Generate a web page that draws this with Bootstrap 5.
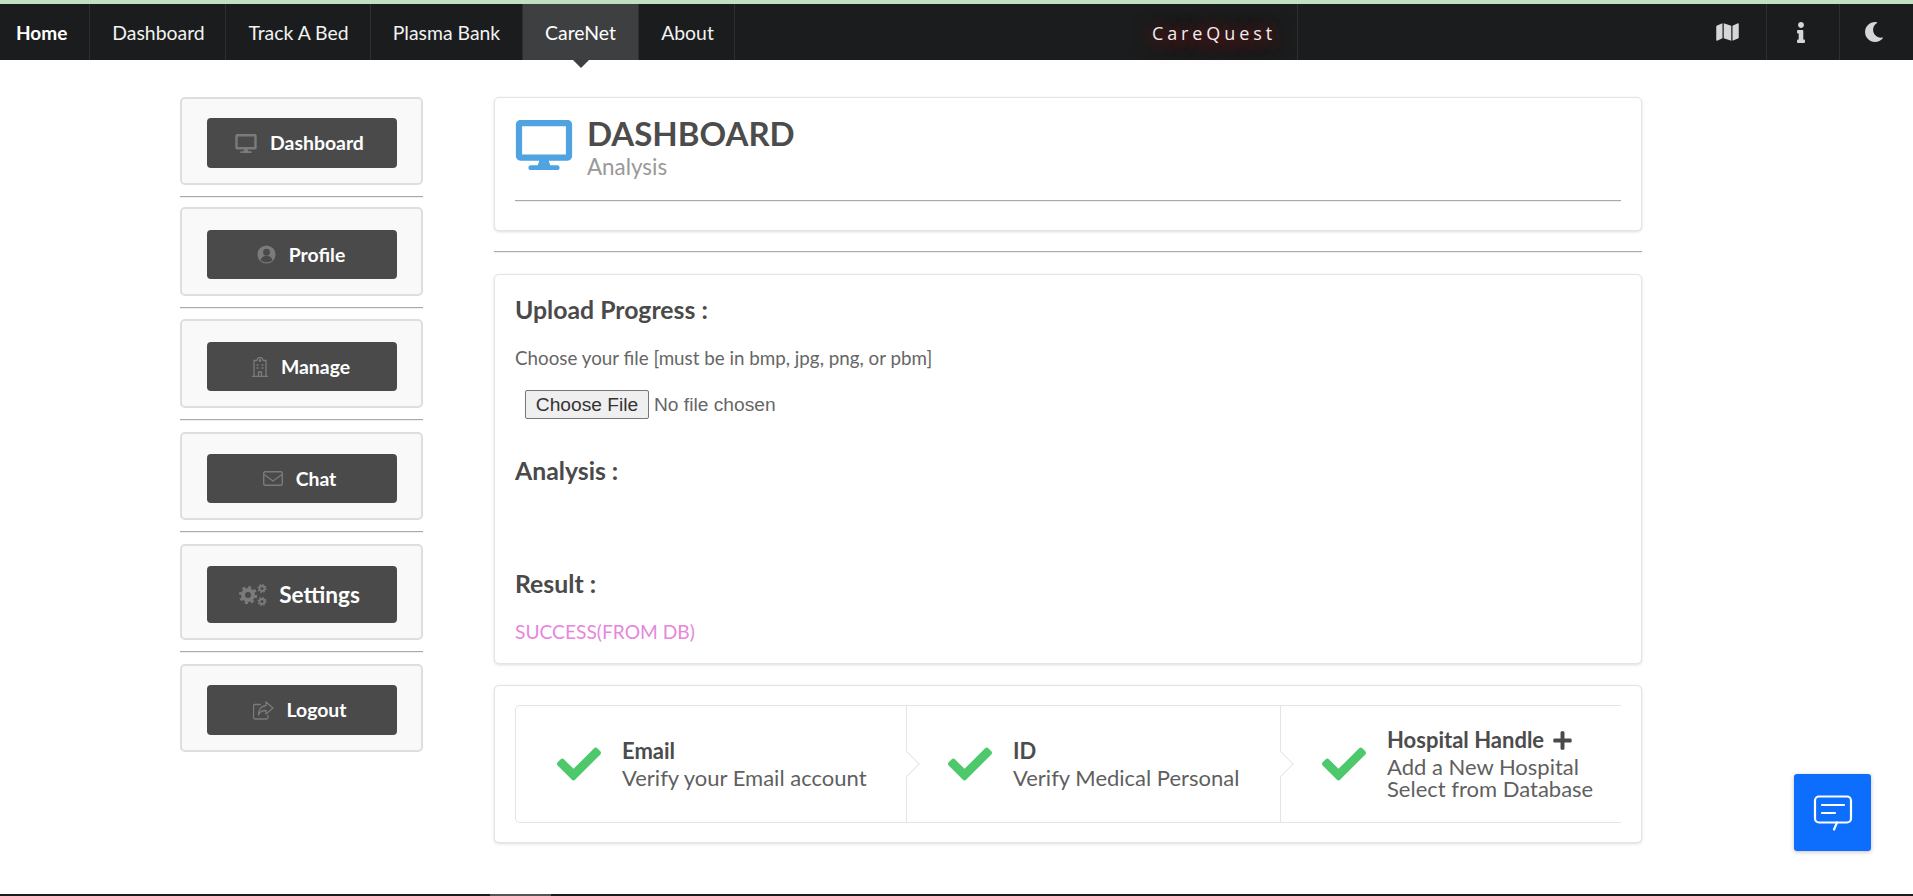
<!DOCTYPE html>
<html lang="en">
<head>
<meta charset="utf-8">
<title>CareQuest</title>
<link href="https://cdn.jsdelivr.net/npm/bootstrap@5.3.0/dist/css/bootstrap.min.css" rel="stylesheet">
<style>
html,body{height:100%}
body{font-family:Lato,"Liberation Sans",sans-serif;color:#4a4a4a;background:#fff;overflow:hidden}
.cq-strip{height:4px;background:#c3dfc3}
.cq-nav{height:56px;background:#1b1c1d;padding:0;flex-wrap:nowrap;align-items:stretch;justify-content:flex-start}
.cq-link{position:relative;display:flex;flex:none;align-items:center;justify-content:center;padding-top:2px;color:#f2f2f2;font-size:19.4px;text-decoration:none;border-right:1px solid #2e2f30;white-space:nowrap}
.cq-link:hover{color:#fff}
.cq-w1{width:136px;padding-left:2px}
.cq-w2{width:145px;padding-left:1px}
.cq-w3{width:152px}
.cq-w4{width:96px;padding-left:2px}
.cq-link.cq-home{justify-content:flex-start;padding-left:16px;font-weight:700;color:#fff;width:90px;font-size:19px}
.cq-link.cq-on{background:#3e3f41;color:#fff;width:116px}
.cq-link.cq-on::after{content:"";position:absolute;left:50%;top:100%;margin-left:-8px;border:8px solid transparent;border-top-color:#3e3f41;border-bottom:0}
.cq-brand{width:563px;justify-content:flex-end;padding-right:21px;font-family:"Open Sans",sans-serif;font-size:18px;letter-spacing:3.9px;color:#eee;text-shadow:0 2px 14px #a01414,0 2px 22px #7a0f0f}
.cq-spacer{flex:1 1 auto}
.cq-icon{display:flex;align-items:center;justify-content:center;color:#d6d6d6;width:73px;padding-right:5px}
.cq-icon svg{fill:currentColor;display:block}
.cq-i1,.cq-i2{border-right:1px solid #2e2f30}
.cq-page{padding:37px 0 51px 180px;height:832px;gap:71px;align-items:flex-start}
.cq-side{width:243px;flex:none}
.cq-tile{background:#f9f9f9;border:2px solid #dedede;border-radius:5px;display:flex;justify-content:center;align-items:flex-start;padding-top:19px}
.cq-t1{height:88px}
.cq-t2{height:89px;padding-top:21px}
.cq-t4{height:88px;padding-top:20px}
.cq-t3{height:96px;padding-top:20px}
.cq-tile .cq-btn{width:190px;height:49px;background:#4a4a4a;color:#fff;border:0;border-radius:4px;font-weight:700;font-size:19.4px;padding:0 4px 0 0;display:flex;align-items:center;justify-content:center;gap:13px}
.cq-tile .cq-mid{padding-right:1px}
.cq-tile .cq-btn svg{display:block;color:#7b7b7b}
.cq-t1 .cq-btn{height:50px}
.cq-tile .cq-big{height:57px;font-size:22.600px;gap:12px}
.cq-rule{margin:11px 0;border:0;border-top:1px solid #a9a9a9;border-bottom:1px solid #efefef;opacity:1;height:2px}
.cq-side .cq-tight{margin-bottom:9px}
.cq-side .cq-snug{margin-bottom:10px}
.cq-main{width:1148px;flex:none}
.cq-panel{background:#fff;border:1px solid #e4e4e4;border-radius:5px;box-shadow:0 1px 3px rgba(34,36,38,.16);padding:0 20px}
.cq-p1{height:134px;padding-top:20px}
.cq-p2{height:390px;padding-top:20px}
.cq-p3{height:158px;padding-top:19px;margin-top:21px}
.cq-head{gap:14px;height:67px}
.cq-logo{flex:none;margin-top:2px}
.cq-head h2{font-size:33px;line-height:36px;font-weight:700;margin:-3px 0 0;color:#4c4c4c}
.cq-head p{font-size:22.400px;line-height:24px;margin:4px 0 0;color:#999}
.cq-p1 .cq-rule{margin:15px 0 0}
.cq-main>.cq-rule{margin:20px 0 21px}
.cq-p2 h3{font-size:24.800px;line-height:30px;font-weight:700;margin:0;color:#4a4a4a}
.cq-hint{font-size:18.800px;line-height:24px;margin:21px 0 20px;color:#666}
.cq-file{display:block;margin-left:10px;font-family:"Liberation Sans",sans-serif;font-size:19.200px;color:#666}
.cq-file::file-selector-button{font:inherit;height:29px;width:124px;padding:0;margin-right:5px;color:#333;background:#efefef;border:1px solid #767676;border-radius:2px}
.cq-p2 .cq-s2{margin-top:36px}
.cq-p2 .cq-s3{margin-top:83px}
.cq-ok{color:#e587dd;font-size:19.200px;line-height:24px;margin:21px 0 0}
.cq-steps{height:118px;border:1px solid #e4e4e4;border-right:0;border-radius:5px 0 0 5px;overflow:hidden}
.cq-step{position:relative;display:flex;align-items:center;height:100%;padding-left:41px;gap:21px;flex:none}
.cq-step+.cq-step{border-left:1px solid #e4e4e4}
.cq-step+.cq-step::before{content:"";position:absolute;left:-10px;top:50%;width:20px;height:20px;margin-top:-10px;background:#fff;border-top:1px solid #e4e4e4;border-right:1px solid #e4e4e4;transform:rotate(45deg) scale(.9)}
.cq-s-a{width:390px}
.cq-s-b{width:374px}
.cq-s-c{width:340px}
.cq-chk{fill:#4dc96b;display:block;flex:none}
.cq-tt{font-size:22px;line-height:24px;font-weight:700;color:#4c4c4c;margin-bottom:4px}
.cq-plus{gap:9px}
.cq-dd{font-size:22px;line-height:22px;color:#5f5f5f}
.cq-fab{position:absolute;left:1794px;top:774px;width:77px;height:77px;padding:0;background:#0d6efd;border:0;border-radius:3px;box-shadow:0 1px 4px rgba(0,0,0,.25);display:flex;align-items:center;justify-content:center}
.cq-foot{position:absolute;left:0;right:0;bottom:0;height:2px;background:#1b1c1d}
.cq-foot span{display:block;margin-left:490px;width:61px;height:2px;background:#555}
</style>
</head>
<body>
<div class="cq-strip"></div>
<nav class="navbar cq-nav">
  <a class="cq-link cq-home" href="#">Home</a>
  <a class="cq-link cq-w1" href="#">Dashboard</a>
  <a class="cq-link cq-w2" href="#">Track A Bed</a>
  <a class="cq-link cq-w3" href="#">Plasma Bank</a>
  <a class="cq-link cq-on" href="#">CareNet</a>
  <a class="cq-link cq-w4" href="#">About</a>
  <a class="cq-link cq-brand" href="#">CareQuest</a>
  <div class="cq-spacer"></div>
  <a class="cq-icon cq-i1" href="#"><svg width="23" height="20" viewBox="0 0 576 512"><path d="M0 117.66v346.32c0 11.32 11.43 19.06 21.94 14.86L160 416V32L20.12 87.95A32.006 32.006 0 0 0 0 117.66zM192 416l192 64V96L192 32v384zM554.06 33.16L416 96v384l139.88-55.95A31.996 31.996 0 0 0 576 394.34V48.02c0-11.32-11.43-19.06-21.94-14.86z"/></svg></a>
  <a class="cq-icon cq-i2" href="#"><svg width="8" height="21" viewBox="0 0 192 512"><path d="M20 424.229h20V279.771H20c-11.046 0-20-8.954-20-20V212c0-11.046 8.954-20 20-20h112c11.046 0 20 8.954 20 20v212.229h20c11.046 0 20 8.954 20 20V492c0 11.046-8.954 20-20 20H20c-11.046 0-20-8.954-20-20v-47.771c0-11.046 8.954-20 20-20zM96 0C56.235 0 24 32.235 24 72s32.235 72 72 72 72-32.235 72-72S135.764 0 96 0z"/></svg></a>
  <a class="cq-icon cq-i3" href="#"><svg width="20" height="20" viewBox="0 0 512 512"><path d="M283.211 512c78.962 0 151.079-35.925 198.857-94.792 7.068-8.708-.639-21.43-11.562-19.35-124.203 23.654-238.262-71.576-238.262-196.954 0-72.222 38.662-138.635 101.498-174.394 9.686-5.512 7.25-20.197-3.756-22.23A258.156 258.156 0 0 0 283.211 0c-141.309 0-256 114.511-256 256 0 141.309 114.511 256 256 256z"/></svg></a>
</nav>

<div class="d-flex cq-page">
  <aside class="cq-side">
    <div class="cq-tile cq-t1"><button class="btn cq-btn" type="button"><svg width="22" height="19" viewBox="0 0 576 512" fill="currentColor"><path d="M528 0H48C21.5 0 0 21.5 0 48v320c0 26.5 21.5 48 48 48h192l-16 48h-72c-13.3 0-24 10.7-24 24s10.7 24 24 24h272c13.3 0 24-10.7 24-24s-10.7-24-24-24h-72l-16-48h192c26.5 0 48-21.5 48-48V48c0-26.5-21.5-48-48-48zm-16 352H64V64h448v288z"/></svg>Dashboard</button></div>
    <hr class="cq-rule cq-tight">
    <div class="cq-tile cq-t2"><button class="btn cq-btn cq-mid" type="button"><svg width="19" height="19" viewBox="0 0 20 20"><circle cx="10" cy="10" r="9.500" fill="currentColor"/><circle cx="10" cy="7.600" r="3.600" fill="#4a4a4a"/><path d="M3.800 16c1-3.400 3.500-4.600 6.200-4.600s5.200 1.200 6.200 4.600c-3 3-9.400 3-12.400 0z" fill="#4a4a4a"/></svg>Profile</button></div>
    <hr class="cq-rule cq-snug">
    <div class="cq-tile cq-t2"><button class="btn cq-btn cq-mid" type="button"><svg width="16" height="20" viewBox="0 0 16 20" fill="none" stroke="currentColor" stroke-width="1.300"><path d="M0 19.400h16M2 19.400V3.500h3M14 19.400V3.500h-3M5 3.500a3 3 0 0 1 6 0M8 2v3M6.700 3.500h2.600"/><path d="M4.500 8h2M9.500 8h2M4.500 11h2M9.500 11h2M6.500 19.400V15h3v4.400"/></svg>Manage</button></div>
    <hr class="cq-rule">
    <div class="cq-tile cq-t4"><button class="btn cq-btn" type="button"><svg width="20" height="15" viewBox="0 0 20 15" fill="none" stroke="currentColor" stroke-width="1.400"><rect x=".7" y=".7" width="18.600" height="13.600" rx="1.500"/><path d="M1 3.500l9 6.500 9-6.500"/></svg>Chat</button></div>
    <hr class="cq-rule">
    <div class="cq-tile cq-t3"><button class="btn cq-btn cq-big" type="button"><svg width="28" height="22" viewBox="0 0 28 22" fill="currentColor"><circle cx="9" cy="11" r="5" fill="none" stroke="currentColor" stroke-width="4"/><circle cx="9" cy="11" r="7.800" fill="none" stroke="currentColor" stroke-width="2.600" stroke-dasharray="3 3.130"/><g fill="none" stroke="currentColor"><circle cx="23" cy="4.500" r="2.500" stroke-width="1.800"/><circle cx="23" cy="4.500" r="3.900" stroke-width="1.300" stroke-dasharray="1.500 1.560"/><circle cx="23" cy="17.500" r="2.500" stroke-width="1.800"/><circle cx="23" cy="17.500" r="3.900" stroke-width="1.300" stroke-dasharray="1.500 1.560"/></g></svg>Settings</button></div>
    <hr class="cq-rule">
    <div class="cq-tile cq-t1"><button class="btn cq-btn" type="button"><svg width="21" height="19" viewBox="0 0 21 19" fill="none" stroke="currentColor" stroke-width="1.300"><path d="M8 3.500H2a1.500 1.500 0 0 0-1.500 1.500v11.500A1.500 1.500 0 0 0 2 18h11.500a1.500 1.500 0 0 0 1.500-1.500V14"/><path d="M13 1l7 6-7 6V9.500c-4 0-6.500 1-7.500 4.500C5 9 8 5 13 4.500z" stroke-linejoin="round"/></svg>Logout</button></div>
  </aside>

  <main class="cq-main">
    <section class="cq-panel cq-p1">
      <div class="d-flex cq-head">
        <svg class="cq-logo" width="58" height="50" viewBox="0 0 576 512" fill="#4fa3e0"><path d="M528 0H48C21.500 0 0 21.500 0 48v320c0 26.500 21.500 48 48 48h192l-16 48h-72c-13.300 0-24 10.700-24 24s10.700 24 24 24h272c13.300 0 24-10.700 24-24s-10.700-24-24-24h-72l-16-48h192c26.500 0 48-21.500 48-48V48c0-26.500-21.500-48-48-48zm-16 352H64V64h448v288z"/></svg>
        <div><h2>DASHBOARD</h2><p>Analysis</p></div>
      </div>
      <hr class="cq-rule">
    </section>
    <hr class="cq-rule">
    <section class="cq-panel cq-p2">
      <h3>Upload Progress :</h3>
      <p class="cq-hint">Choose your file [must be in bmp, jpg, png, or pbm]</p>
      <input class="cq-file" type="file">
      <h3 class="cq-s2">Analysis :</h3>
      <h3 class="cq-s3">Result :</h3>
      <p class="cq-ok">SUCCESS(FROM DB)</p>
    </section>
    <section class="cq-panel cq-p3">
      <div class="d-flex cq-steps">
        <div class="cq-step cq-s-a"><svg class="cq-chk" width="44" height="44" viewBox="0 0 512 512"><path d="M173.898 439.404l-166.4-166.4c-9.997-9.997-9.997-26.206 0-36.204l36.203-36.204c9.997-9.998 26.207-9.998 36.204 0L192 312.69 432.095 72.596c9.997-9.997 26.207-9.997 36.204 0l36.203 36.204c9.997 9.997 9.997 26.206 0 36.204l-294.4 294.401c-9.998 9.997-26.207 9.997-36.204-.001z"/></svg><div><div class="cq-tt">Email</div><div class="cq-dd">Verify your Email account</div></div></div>
        <div class="cq-step cq-s-b"><svg class="cq-chk" width="44" height="44" viewBox="0 0 512 512"><path d="M173.898 439.404l-166.4-166.4c-9.997-9.997-9.997-26.206 0-36.204l36.203-36.204c9.997-9.998 26.207-9.998 36.204 0L192 312.69 432.095 72.596c9.997-9.997 26.207-9.997 36.204 0l36.203 36.204c9.997 9.997 9.997 26.206 0 36.204l-294.4 294.401c-9.998 9.997-26.207 9.997-36.204-.001z"/></svg><div><div class="cq-tt">ID</div><div class="cq-dd">Verify Medical Personal</div></div></div>
        <div class="cq-step cq-s-c"><svg class="cq-chk" width="44" height="44" viewBox="0 0 512 512"><path d="M173.898 439.404l-166.4-166.4c-9.997-9.997-9.997-26.206 0-36.204l36.203-36.204c9.997-9.998 26.207-9.998 36.204 0L192 312.69 432.095 72.596c9.997-9.997 26.207-9.997 36.204 0l36.203 36.204c9.997 9.997 9.997 26.206 0 36.204l-294.4 294.401c-9.998 9.997-26.207 9.997-36.204-.001z"/></svg><div><div class="cq-tt d-flex align-items-center cq-plus">Hospital Handle <svg width="19" height="21" viewBox="0 0 448 512" fill="#4a4a4a"><path d="M416 208H272V64c0-17.670-14.330-32-32-32h-32c-17.670 0-32 14.330-32 32v144H32c-17.670 0-32 14.330-32 32v32c0 17.670 14.330 32 32 32h144v144c0 17.670 14.330 32 32 32h32c17.670 0 32-14.330 32-32V304h144c17.670 0 32-14.330 32-32v-32c0-17.670-14.330-32-32-32z"/></svg></div><div class="cq-dd">Add a New Hospital<br>Select from Database</div></div></div>
      </div>
    </section>
  </main>
</div>

<button class="btn cq-fab" type="button" aria-label="Chat"><svg width="40" height="36" viewBox="0 0 40 36" fill="none" stroke="#fff" stroke-width="2.200" stroke-linecap="round" stroke-linejoin="round"><rect x="2" y="1.500" width="36" height="26" rx="4"/><path d="M24 27.500l-3 7M9 10h22M9 18h13"/></svg></button>
<div class="cq-foot"><span></span></div>
<script src="https://cdn.jsdelivr.net/npm/bootstrap@5.3.0/dist/js/bootstrap.bundle.min.js"></script>
</body>
</html>
